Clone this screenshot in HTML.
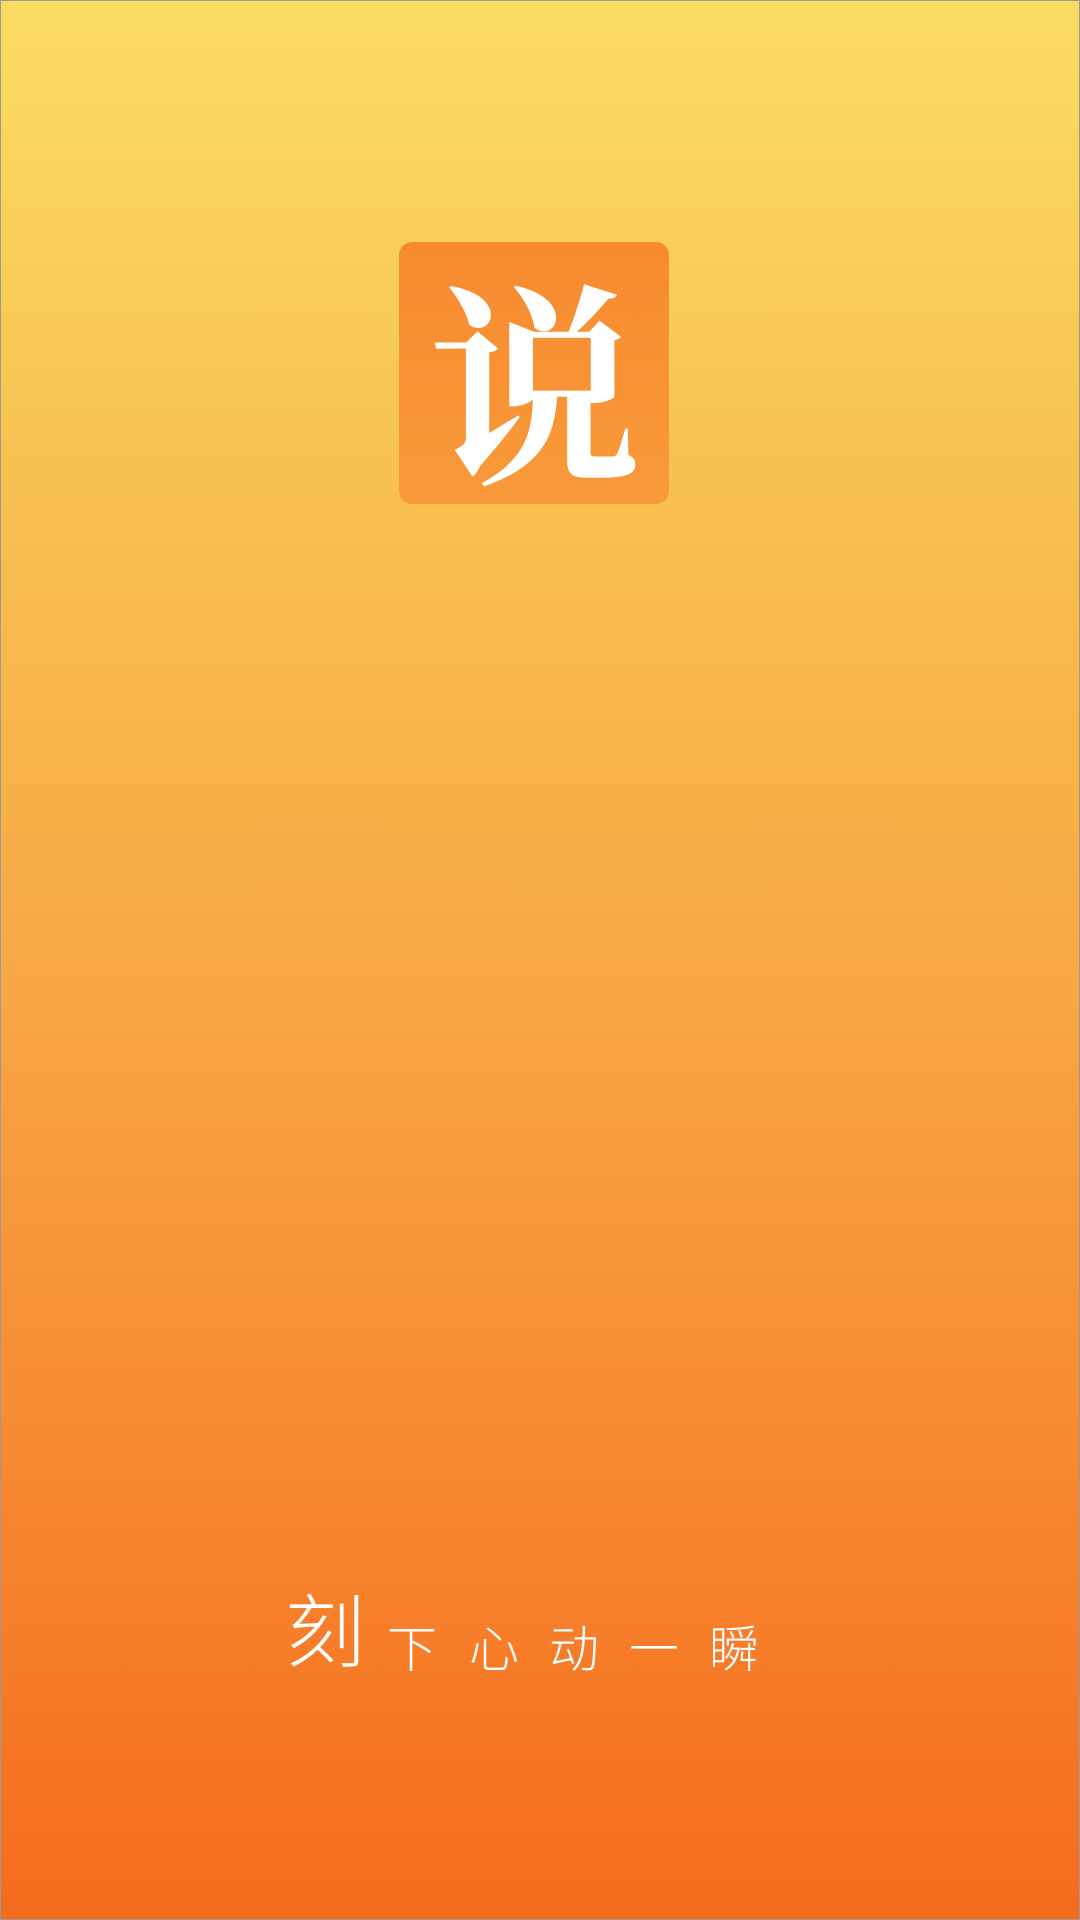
<!DOCTYPE html>
<html><head><meta charset="utf-8"><style>
html,body{margin:0;padding:0}
body{width:1080px;height:1920px;position:relative;overflow:hidden;
background:linear-gradient(180deg,#fbdd63 0%,#f8c150 25%,#f8a845 50%,#f78a31 75%,#f66b1e 100%);
box-sizing:border-box;border:1px solid #9a9a9a;font-family:"Liberation Sans","Noto Sans CJK SC",sans-serif}
.logo{position:absolute;left:398px;top:241px;width:270px;height:262px;border-radius:13px;
background:linear-gradient(180deg,#f78a2f,#f89a3b)}
.logo span{position:absolute;left:0;right:0;top:8px;text-align:center;color:#fff;font-size:215px;line-height:250px;font-weight:bold;font-family:"Noto Serif CJK SC","Noto Sans CJK SC",serif}
.c{position:absolute;color:#fff;font-family:"Noto Sans CJK SC",sans-serif;font-weight:300;line-height:1}
</style></head><body>
<div class="logo"><span>说</span></div>
<div class="c" style="left:284px;top:1586px;font-size:80px">刻</div>
<div class="c" style="left:386px;top:1620px;font-size:50px">下</div>
<div class="c" style="left:468px;top:1620px;font-size:50px">心</div>
<div class="c" style="left:548px;top:1620px;font-size:50px">动</div>
<div class="c" style="left:628px;top:1620px;font-size:50px">一</div>
<div class="c" style="left:708px;top:1620px;font-size:50px">瞬</div>
</body></html>
